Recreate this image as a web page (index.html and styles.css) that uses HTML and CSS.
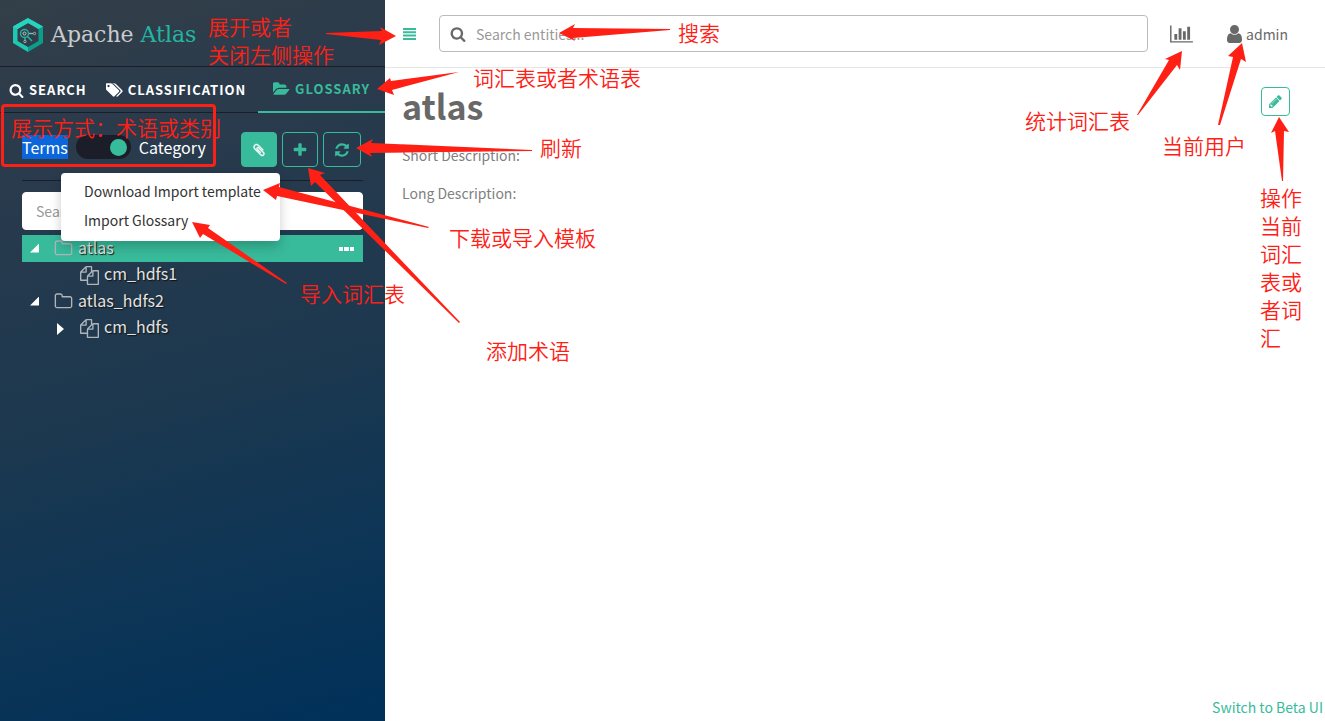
FILE: index.html
```html
<!DOCTYPE html>
<html lang="zh-CN">
<head>
    <meta charset="UTF-8">
    <meta name="viewport" content="width=device-width, initial-scale=1.0">
    <title>Apache Atlas</title>
    <link rel="stylesheet" href="styles.css">
</head>
<body>

    <!-- Shared icons -->
    <svg class="icon-defs" aria-hidden="true">
        <symbol id="icon-search" viewBox="0 0 1792 1792"><path d="M1216 832q0-185-131.500-316.500t-316.500-131.500-316.500 131.500-131.500 316.500 131.500 316.500 316.500 131.500 316.500-131.500 131.500-316.500zm512 832q0 52-38 90t-90 38q-54 0-90-38l-343-342q-179 124-399 124-143 0-273.500-55.500t-225-150-150-225-55.500-273.500 55.500-273.500 150-225 225-150 273.500-55.500 273.500 55.500 225 150 150 225 55.500 273.500q0 220-124 399l343 343q37 37 37 90z"/></symbol>
        <symbol id="icon-folder" viewBox="0 0 1792 1792"><path d="M1600 1312v-704q0-40-28-68t-68-28h-704q-40 0-68-28t-28-68v-64q0-40-28-68t-68-28h-320q-40 0-68 28t-28 68v960q0 40 28 68t68 28h1216q40 0 68-28t28-68zm128-704v704q0 92-66 158t-158 66h-1216q-92 0-158-66t-66-158v-960q0-92 66-158t158-66h320q92 0 158 66t66 158v32h672q92 0 158 66t66 158z"/></symbol>
        <symbol id="icon-files" viewBox="0 0 1792 1792"><path d="M1696 384q40 0 68 28t28 68v1216q0 40-28 68t-68 28h-960q-40 0-68-28t-28-68v-288h-544q-40 0-68-28t-28-68v-672q0-40 20-88t48-76l408-408q28-28 76-48t88-20h416q40 0 68 28t28 68v328q68-40 128-40h416zm-544 213l-299 299h299v-299zm-640-384l-299 299h299v-299zm196 647l316-316v-416h-384v416q0 40-28 68t-68 28h-416v640h512v-256q0-40 20-88t48-76zm956 804v-1152h-384v416q0 40-28 68t-68 28h-416v640h896z"/></symbol>
    </svg>

    <div class="page">
        <aside class="sidebar">
            <a class="logo" href="#">
                <svg class="logo-mark" width="30" height="34" viewBox="0 0 30 34">
                    <path d="M15 0L0 8.500V25L15 34V29L4.500 23V11L15 5z" fill="#1fc7b2"/>
                    <path d="M15 0L30 8.500V25L15 34V29L25.500 23V11L15 5z" fill="#0b9d8a"/>
                    <path d="M15 0L30 8.500L25.500 11L15 5L4.500 11L0 8.500z" fill="#27d3bc"/>
                    <circle cx="11.500" cy="15.500" r="4" fill="none" stroke="#1fb5a3" stroke-width="1.500"/>
                    <circle cx="11.500" cy="15.500" r="1.500" fill="none" stroke="#c9cdd0"/>
                    <path d="M14.500 18.500L19 23M16 15.500H20M12 20V22" stroke="#1fb5a3" stroke-width="1.500"/>
                    <path d="M16 15.500H20" stroke="#a7adb2"/>
                    <circle cx="21.500" cy="15.500" r="1.200" fill="none" stroke="#a7adb2"/>
                    <circle cx="12" cy="23.500" r="1.200" fill="none" stroke="#a7adb2"/>
                </svg>
                <span>Apache <span class="logo-accent">Atlas</span></span>
            </a>

            <nav class="tabs">
                <a class="tab" href="#"><svg class="icon" width="15" height="15"><use href="#icon-search"/></svg>SEARCH</a>
                <a class="tab" href="#"><svg class="icon" width="17" height="16" viewBox="0 0 1850 1792"><path d="M384 448q0-53-37.500-90.500t-90.500-37.500-90.500 37.500-37.500 90.500 37.500 90.500 90.500 37.500 90.500-37.500 37.500-90.500zm1067 576q0 53-37 90l-491 492q-39 37-91 37-53 0-90-37l-715-716q-38-37-64.500-101t-26.500-117v-416q0-52 38-90t90-38h416q53 0 117 26.500t102 64.500l715 714q37 39 37 91zm384 0q0 53-37 90l-491 492q-39 37-91 37-36 0-59-14t-53-45l470-470q37-37 37-90 0-52-37-91l-715-714q-38-38-102-64.500t-117-26.500h224q53 0 117 26.500t102 64.500l715 714q37 39 37 91z"/></svg>CLASSIFICATION</a>
                <a class="tab active" href="#"><svg class="icon" width="17" height="16" viewBox="0 0 1850 1792"><path d="M1815 952q0 31-31 66l-336 396q-43 51-120.500 86.500t-143.500 35.500h-1088q-34 0-60.500-13t-26.500-43q0-31 31-66l336-396q43-51 120.500-86.500t143.500-35.500h1088q34 0 60.500 13t26.500 43zm-343-344v160h-832q-94 0-197 47.500t-164 119.500l-337 396-5 6q0-4-.5-12.500t-.5-12.500v-960q0-92 66-158t158-66h320q92 0 158 66t66 158v32h544q92 0 158 66t66 158z"/></svg>GLOSSARY</a>
            </nav>

            <div class="glossary">
                <div class="controls">
                    <label class="selected-text" for="viewToggle">Terms</label>
                    <input class="toggle" type="checkbox" id="viewToggle" aria-label="Terms or Category" checked>
                    <label for="viewToggle">Category</label>
                    <div class="buttons">
                        <button class="btn btn-filled" type="button" aria-label="Import">
                            <svg class="icon" width="14" height="14" viewBox="0 0 1792 1792"><path stroke="currentColor" stroke-width="60" d="M1596 1385q0 117-79 196t-196 79q-135 0-235-100l-777-776q-113-115-113-271 0-159 110-270t269-111q158 0 273 113l605 606q10 10 10 22 0 16-30.500 46.500t-46.500 30.500q-13 0-23-10l-606-607q-79-77-181-77-106 0-179 75t-73 181q0 105 76 181l776 777q63 63 145 63 64 0 106-42t42-106q0-82-63-145l-581-581q-26-24-60-24-29 0-48 19t-19 48q0 32 25 59l410 410q10 10 10 22 0 16-31 47t-47 31q-12 0-22-10l-410-410q-63-61-63-149 0-82 57-139t139-57q88 0 149 63l581 581q100 98 100 235z"/></svg>
                        </button>
                        <button class="btn" type="button" aria-label="Add">
                            <svg class="icon" width="16" height="16" viewBox="0 0 1792 1792"><path d="M1600 736v192q0 40-28 68t-68 28h-416v416q0 40-28 68t-68 28h-192q-40 0-68-28t-28-68v-416h-416q-40 0-68-28t-28-68v-192q0-40 28-68t68-28h416v-416q0-40 28-68t68-28h192q40 0 68 28t28 68v416h416q40 0 68 28t28 68z"/></svg>
                        </button>
                        <button class="btn" type="button" aria-label="Refresh">
                            <svg class="icon" width="16" height="16" viewBox="0 0 1792 1792"><path d="M1639 1056q0 5-1 7-64 268-268 434.500t-478 166.500q-146 0-282.500-55t-243.500-157l-129 129q-19 19-45 19t-45-19-19-45v-448q0-26 19-45t45-19h448q26 0 45 19t19 45-19 45l-137 137q71 66 161 102t187 36q134 0 250-65t186-179q11-17 53-117 8-23 30-23h192q13 0 22.500 9.500t9.500 22.500zm25-800v448q0 26-19 45t-45 19h-448q-26 0-45-19t-19-45 19-45l138-138q-148-137-349-137-134 0-250 65t-186 179q-11 17-53 117-8 23-30 23h-199q-13 0-22.500-9.500t-9.500-22.500v-7q65-268 270-434.500t480-166.500q146 0 284 55.500t245 156.500l130-129q19-19 45-19t45 19 19 45z"/></svg>
                        </button>
                    </div>
                    <div class="dropdown">
                        <a href="#">Download Import template</a>
                        <a href="#">Import Glossary</a>
                    </div>
                </div>

                <input class="tree-search" type="text" placeholder="Search Term" aria-label="Search Term">

                <ul class="tree">
                    <li class="node selected">
                        <span class="caret open"></span>
                        <svg class="icon" width="19" height="19"><use href="#icon-folder"/></svg>
                        <span class="name">atlas</span>
                        <button class="more" type="button" aria-label="More">
                            <svg class="icon" width="16" height="6" viewBox="0 0 16 6"><path d="M0 1h4v4H0zM5 1h5v4H5zM11 1h4v4h-4z"/></svg>
                        </button>
                    </li>
                    <li class="node child">
                        <span class="caret"></span>
                        <svg class="icon" width="19" height="19"><use href="#icon-files"/></svg>
                        <span class="name">cm_hdfs1</span>
                    </li>
                    <li class="node">
                        <span class="caret open"></span>
                        <svg class="icon" width="19" height="19"><use href="#icon-folder"/></svg>
                        <span class="name">atlas_hdfs2</span>
                    </li>
                    <li class="node child">
                        <span class="caret closed"></span>
                        <svg class="icon" width="19" height="19"><use href="#icon-files"/></svg>
                        <span class="name">cm_hdfs</span>
                    </li>
                </ul>
            </div>
        </aside>

        <main class="main">
            <header class="header">
                <button class="menu" type="button" aria-label="Toggle sidebar">
                    <svg class="icon" width="14" height="12" viewBox="0 0 14 12"><path d="M0 0h13v2H0zM0 3.300h13v2H0zM0 6.600h13v2H0zM0 10h13v2H0z"/></svg>
                </button>
                <div class="search-box">
                    <svg class="icon" width="16" height="16"><use href="#icon-search"/></svg>
                    <input type="text" placeholder="Search entities..." aria-label="Search entities">
                </div>
                <button class="stats" type="button" aria-label="Statistics">
                    <svg class="icon" width="23" height="20" viewBox="0 0 2048 1792"><path d="M640 896v512h-256v-512h256zm384-512v1024h-256v-1024h256zm1024 1152v128h-2048v-1536h128v1408h1920zm-640-896v768h-256v-768h256zm384-384v1152h-256v-1152h256z"/></svg>
                </button>
                <a class="user" href="#">
                    <svg class="icon" width="15" height="18" viewBox="256 128 1280 1536"><path d="M1536 1399q0 109-62.500 187t-150.500 78h-854q-88 0-150.500-78t-62.500-187q0-85 8.500-160.500t31.500-152 58.500-131 94-89 134.500-34.500q131 128 313 128t313-128q76 0 134.500 34.500t94 89 58.500 131 31.500 152 8.500 160.500zm-256-887q0 159-112.500 271.500t-271.500 112.500-271.500-112.500-112.500-271.500 112.500-271.500 271.500-112.500 271.500 112.500 112.500 271.500z"/></svg>
                    admin
                </a>
            </header>

            <section class="detail">
                <div class="detail-head">
                    <h1>atlas</h1>
                    <button class="edit" type="button" aria-label="Edit">
                        <svg class="icon" width="15" height="15" viewBox="0 0 1792 1792"><path d="M491 1536l91-91-235-235-91 91v107h128v128h107zm523-928q0-22-22-22-10 0-17 7l-542 542q-7 7-7 17 0 22 22 22 10 0 17-7l542-542q7-7 7-17zm-54-192l416 416-832 832h-416v-416zm683 96q0 53-37 90l-166 166-416-416 166-165q36-38 90-38 53 0 91 38l235 234q37 39 37 91z"/></svg>
                    </button>
                </div>
                <p>Short Description:</p>
                <p>Long Description:</p>
            </section>

            <a class="beta" href="#">Switch to Beta UI</a>
        </main>
    </div>

    <!-- Notes drawn over the page -->
    <div class="notes">
        <div class="note-frame"></div>
        <svg class="arrows" width="1325" height="721" viewBox="0 0 1325 721">
            <polygon points="326,33 382,31 380,27 396,36 379,45 381,40 326,34"/>
            <polygon points="459,72 391,81 390,78 377,89 394,95 392,90"/>
            <polygon points="670,29 573,28 575,24 559,33 575,41 573,38 670,30"/>
            <polygon points="532,150 371,143 373,139 356,148 372,157 370,153 532,151"/>
            <polygon points="429,227 279,187 280,183 263,190 276,200 277,196 428,228"/>
            <polygon points="460,322 320,175 325,173 308,168 311,186 315,182 459,323"/>
            <polygon points="287,283 208,228 210,225 192,222 200,238 203,234 286,284"/>
            <polygon points="1137,115 1169,60 1165,59 1182,51 1180,70 1177,65 1138,115"/>
            <polygon points="1218,125 1233,57 1228,56 1242,43 1246,62 1241,59 1220,125"/>
            <polygon points="1282,181 1275,131 1271,133 1279,117 1289,132 1284,131 1283,181"/>
        </svg>
        <p class="note note-menu">展开或者<br>关闭左侧操作</p>
        <p class="note note-search">搜索</p>
        <p class="note note-tab">词汇表或者术语表</p>
        <p class="note note-toggle">展示方式：术语或类别</p>
        <p class="note note-refresh">刷新</p>
        <p class="note note-template">下载或导入模板</p>
        <p class="note note-import">导入词汇表</p>
        <p class="note note-add">添加术语</p>
        <p class="note note-stats">统计词汇表</p>
        <p class="note note-user">当前用户</p>
        <p class="note note-edit">操作<br>当前<br>词汇<br>表或<br>者词<br>汇</p>
    </div>

</body>
</html>
```
FILE: styles.css
```css
* {
    box-sizing: border-box;
}

body {
    margin: 0;
    font-family: "Noto Sans CJK SC", sans-serif;
    font-size: 14px;
    line-height: 20px;
    color: #686868;
    background-color: #fff;
}

a {
    color: inherit;
    text-decoration: none;
}

button {
    padding: 0;
    border: none;
    background: none;
    color: inherit;
    cursor: pointer;
}

input {
    font-family: inherit;
    font-size: 14px;
}

input::placeholder {
    color: #999;
    opacity: 1;
}

.icon-defs {
    display: none;
}

.icon {
    display: block;
    flex: none;
    fill: currentColor;
}

.page {
    display: flex;
    min-height: 100vh;
}

/* Sidebar */
.sidebar {
    flex: none;
    width: 385px;
    color: #fff;
    background: linear-gradient(165deg, #333f48 0%, #2b3b4c 18%, #1c384f 54%, #0d3556 78%, #003059 100%);
}

.logo {
    display: flex;
    align-items: center;
    gap: 8px;
    height: 67px;
    padding: 3px 13px 0;
    border-bottom: 1px solid #1b1d29;
    font-family: "DejaVu Serif", serif;
    font-size: 22px;
    color: #c9cbcd;
}

.logo-accent {
    color: #22b5a2;
}

.tabs {
    display: flex;
    height: 46px;
    border-bottom: 1px solid #1b1d29;
}

.tab {
    display: flex;
    align-items: center;
    gap: 5px;
    height: 46px;
    padding: 0 10px 0 9px;
    font-size: 13px;
    font-weight: bold;
    letter-spacing: 1px;
}

.tab.active {
    margin-left: auto;
    padding: 0 15px;
    color: #38bb9b;
    border-bottom: 2px solid #38bb9b;
}

.glossary {
    padding: 19px 22px;
}

.controls {
    position: relative;
    display: flex;
    align-items: flex-start;
    height: 49px;
    border-bottom: 1px solid #1b1d29;
    font-size: 16px;
    line-height: 24px;
}

.controls label {
    margin-top: 3px;
}

.selected-text {
    background-color: #0a66da;
}

.toggle {
    appearance: none;
    width: 55px;
    height: 24px;
    margin: 3px 8px 0;
    padding: 4px;
    border-radius: 12px;
    background-color: #1b1d29;
}

.toggle::before {
    content: "";
    display: block;
    width: 17px;
    height: 17px;
    border-radius: 50%;
    background-color: #38bb9b;
}

.toggle:checked::before {
    margin-left: auto;
}

.buttons {
    display: flex;
    gap: 5px;
    margin-left: auto;
    padding-right: 2px;
}

.btn {
    display: flex;
    align-items: center;
    justify-content: center;
    width: 36px;
    height: 35px;
    border: 1px solid #38bb9b;
    border-radius: 4px;
    color: #38bb9b;
}

.btn:last-child {
    width: 38px;
}

.btn-filled {
    color: #fff;
    background-color: #38bb9b;
}

.dropdown {
    position: absolute;
    top: 41px;
    left: 39px;
    display: flex;
    flex-direction: column;
    padding: 4px 0 6px;
    border-radius: 4px;
    background-color: #fff;
    box-shadow: 0 6px 12px rgba(0, 0, 0, 0.2);
}

.dropdown a {
    padding: 2px 19px 3px 23px;
    font-size: 14px;
    color: #333;
}

.tree-search {
    display: block;
    width: 100%;
    height: 38px;
    margin: 11px 0 5px;
    padding: 0 13px;
    border: 1px solid #fff;
    border-radius: 4px;
}

.tree {
    margin: 0;
    padding: 0;
    list-style: none;
    font-size: 16px;
    color: #e3e3e3;
    text-shadow: 1px 1px 1px #111;
}

.node {
    display: flex;
    align-items: center;
    height: 27px;
    padding: 0 8px;
}

.node .icon {
    margin-right: 5px;
    color: #aeb5bb;
}

.node .name {
    padding-bottom: 4px;
}

.node.child {
    height: 26px;
    padding-left: 35px;
}

.node.selected {
    background-color: #38bb9b;
}

.caret {
    width: 24px;
    height: 10px;
}

.node.child .caret {
    width: 23px;
}

.caret.open::before,
.caret.closed::before {
    content: "";
    display: block;
    width: 9px;
    height: 9px;
    background-color: #fff;
    clip-path: polygon(100% 0, 100% 100%, 0 100%);
}

.caret.closed::before {
    width: 7px;
    height: 12px;
    clip-path: polygon(0 0, 100% 50%, 0 100%);
}

.more {
    margin-left: auto;
}

.node .more .icon {
    margin: 0;
    color: #fff;
}

/* Main area */
.main {
    display: flex;
    flex: 1;
    flex-direction: column;
    min-width: 0;
}

.header {
    display: flex;
    align-items: center;
    height: 68px;
    padding: 0 37px 0 18px;
    border-bottom: 1px solid #e5e5e5;
}

.menu {
    color: #38bb9b;
}

.search-box {
    display: flex;
    align-items: center;
    flex: 1;
    gap: 10px;
    height: 37px;
    margin: 0 22px;
    padding: 0 10px;
    border: 1px solid #bbb;
    border-radius: 4px;
}

.search-box input {
    flex: 1;
    min-width: 0;
    padding: 0;
    border: none;
    outline: none;
}

.user {
    display: flex;
    align-items: center;
    gap: 4px;
    margin-left: 34px;
}

.detail {
    padding: 18px 35px 0 17px;
}

.detail-head {
    display: flex;
    align-items: flex-start;
    justify-content: space-between;
    margin-bottom: 19px;
}

.detail h1 {
    margin: 0;
    font-size: 34px;
    line-height: 40px;
}

.edit {
    display: flex;
    align-items: center;
    justify-content: center;
    width: 29px;
    height: 29px;
    margin-top: 1px;
    border: 1px solid #38bb9b;
    border-radius: 4px;
    color: #38bb9b;
}

.detail p {
    margin: 0 0 18px;
    color: #808080;
}

.beta {
    margin: auto 2px 4px auto;
    color: #38bb9b;
}

/* Notes */
.notes {
    position: absolute;
    top: 0;
    left: 0;
    color: #ff2015;
    pointer-events: none;
}

.arrows {
    display: block;
    fill: #ff2015;
}

.note-frame {
    position: absolute;
    top: 104px;
    left: 1px;
    width: 215px;
    height: 63px;
    border: 3px solid #ff2015;
    border-radius: 4px;
}

.note {
    position: absolute;
    margin: 0;
    font-size: 21px;
    font-weight: 350;
    line-height: 28px;
    white-space: nowrap;
}

.note-menu {
    top: 12px;
    left: 208px;
}

.note-search {
    top: 18px;
    left: 678px;
}

.note-tab {
    top: 63px;
    left: 473px;
}

.note-toggle {
    top: 113px;
    left: 11px;
}

.note-refresh {
    top: 133px;
    left: 540px;
}

.note-template {
    top: 223px;
    left: 449px;
}

.note-import {
    top: 279px;
    left: 300px;
}

.note-add {
    top: 336px;
    left: 486px;
}

.note-stats {
    top: 106px;
    left: 1025px;
}

.note-user {
    top: 131px;
    left: 1162px;
}

.note-edit {
    top: 183px;
    left: 1260px;
}
```
